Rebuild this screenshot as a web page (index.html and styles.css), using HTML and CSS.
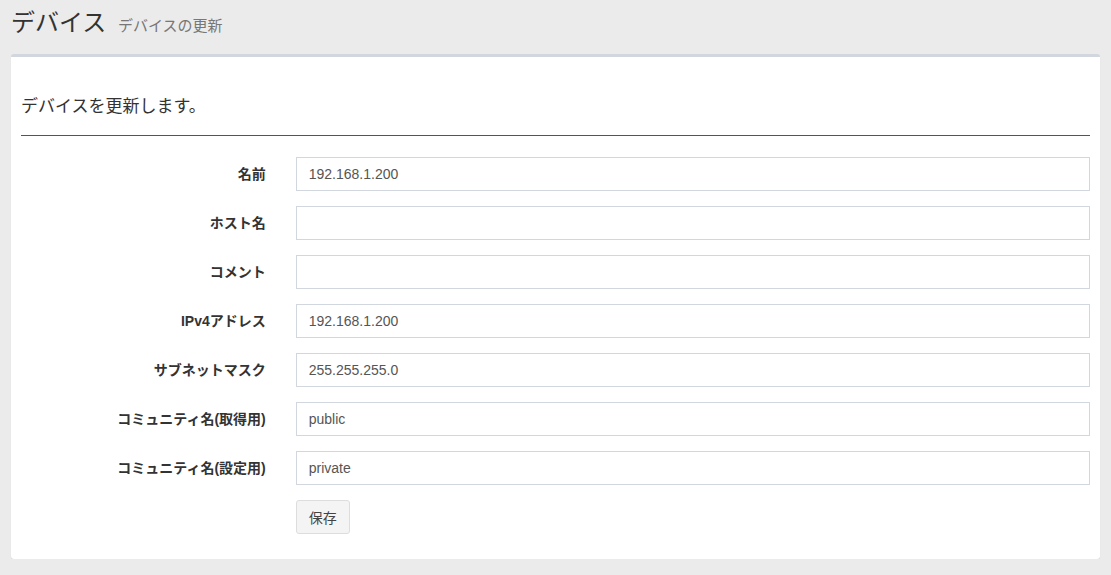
FILE: index.html
```html
<!DOCTYPE html>
<html lang="ja">

<head>
    <meta charset="UTF-8">
    <title>デバイス</title>
    <link rel="stylesheet" href="styles.css">
</head>

<body>
    <section class="content-header">
        <h1>デバイス <small>デバイスの更新</small></h1>
    </section>

    <section class="content">
        <div class="box">
            <div class="box-body">
                <h4 class="lead">デバイスを更新します。</h4>
                <hr>

                <form class="form-horizontal">
                    <div class="form-row">
                        <label for="name">名前</label>
                        <div class="field"><input id="name" type="text" value="192.168.1.200"></div>
                    </div>
                    <div class="form-row">
                        <label for="host">ホスト名</label>
                        <div class="field"><input id="host" type="text"></div>
                    </div>
                    <div class="form-row">
                        <label for="comment">コメント</label>
                        <div class="field"><input id="comment" type="text"></div>
                    </div>
                    <div class="form-row">
                        <label for="ipv4">IPv4アドレス</label>
                        <div class="field"><input id="ipv4" type="text" value="192.168.1.200"></div>
                    </div>
                    <div class="form-row">
                        <label for="mask">サブネットマスク</label>
                        <div class="field"><input id="mask" type="text" value="255.255.255.0"></div>
                    </div>
                    <div class="form-row">
                        <label for="readCommunity">コミュニティ名(取得用)</label>
                        <div class="field"><input id="readCommunity" type="text" value="public"></div>
                    </div>
                    <div class="form-row">
                        <label for="writeCommunity">コミュニティ名(設定用)</label>
                        <div class="field"><input id="writeCommunity" type="text" value="private"></div>
                    </div>
                    <div class="form-row">
                        <span class="spacer"></span>
                        <div class="field"><button type="submit">保存</button></div>
                    </div>
                </form>
            </div>
        </div>
    </section>
</body>

</html>
```

FILE: styles.css
```css
body {
    margin: 0;
    background-color: #ebebeb;
    font-family: "Liberation Sans", "Noto Sans CJK JP", sans-serif;
    font-size: 14px;
    color: #333;
}

.content-header {
    padding: 8px 11px 0;
}

.content-header h1 {
    margin: 0;
    font-size: 24px;
    font-weight: normal;
    line-height: 30px;
    color: #333;
}

.content-header small {
    font-size: 15px;
    color: #777;
    padding-left: 5px;
}

.content {
    padding: 13px 11px 0;
}

.box {
    background-color: #fff;
    border-top: 3px solid #d2d6de;
    border-radius: 3px;
    box-shadow: 0 1px 1px rgba(0, 0, 0, 0.1);
}

.box-body {
    padding: 10px 10px 25px;
}

.lead {
    margin: 28px 0 0;
    font-size: 17px;
    font-weight: normal;
    line-height: 24px;
}

hr {
    margin: 16px 0 21px;
    border: 0;
    border-top: 1px solid #555;
}

.form-horizontal {
    display: flex;
    flex-direction: column;
    gap: 15px;
}

.form-row {
    display: grid;
    grid-template-columns: 25% 75%;
    margin: 0 -15px;
}

.form-row label,
.form-row .spacer {
    padding: 0 15px;
    text-align: right;
    font-weight: bold;
    line-height: 34px;
}

.field {
    padding: 0 15px;
}

input {
    display: block;
    width: 100%;
    height: 34px;
    padding: 6px 12px;
    box-sizing: border-box;
    border: 1px solid #d2d6de;
    font-family: inherit;
    font-size: 14px;
    color: #555;
}

button {
    height: 34px;
    padding: 6px 12px;
    background-color: #f4f4f4;
    border: 1px solid #ddd;
    border-radius: 3px;
    font-family: inherit;
    font-size: 14px;
    color: #444;
    cursor: pointer;
}
```
